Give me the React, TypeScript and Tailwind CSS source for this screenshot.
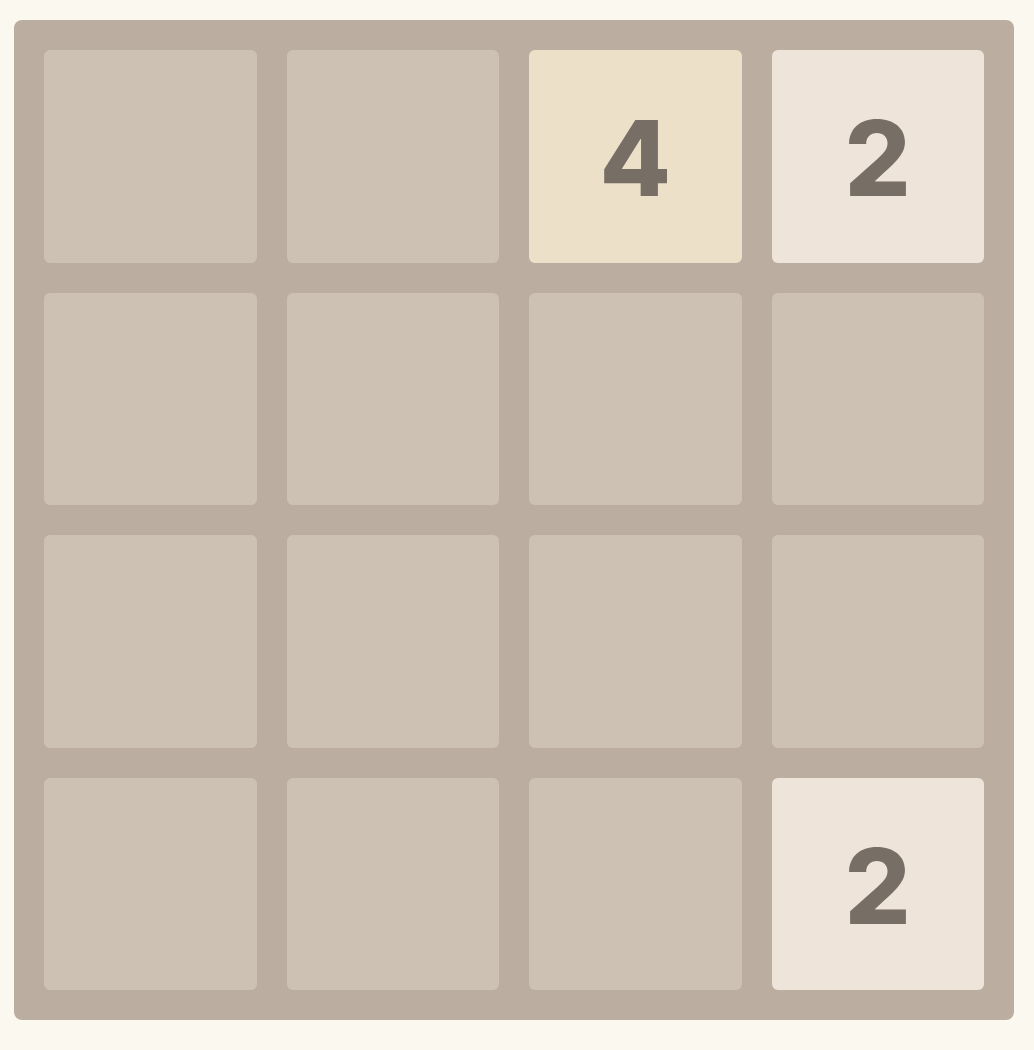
import React from 'react';

// 0 means an empty cell
const board: number[][] = [
    [0, 0, 4, 2],
    [0, 0, 0, 0],
    [0, 0, 0, 0],
    [0, 0, 0, 2],
];

const tileClass = (value: number) => {
    switch (value) {
        case 2:
            return 'bg-[#eee4da] text-[#776e65]';
        case 4:
            return 'bg-[#ede0c8] text-[#776e65]';
        default:
            return 'bg-[#cdc1b4]';
    }
};

const Tile: React.FC<{ value: number }> = ({ value }) => (
    <div
        className={`flex items-center justify-center rounded-md font-extrabold text-[104px] leading-none pt-[4px] ${tileClass(value)}`}
        style={{ fontFamily: 'Inter, "Noto Sans", sans-serif' }}
    >
        {value > 0 ? value : null}
    </div>
);

const App: React.FC = () => {
    return (
        <div className="min-h-screen bg-[#fbf8ef] pl-[14px] pt-[20px] pb-[30px]">
            <div className="grid h-[1000px] w-[1000px] grid-cols-4 grid-rows-4 gap-[30px] rounded-lg bg-[#bbada0] p-[30px]">
                {board.flatMap((row, r) =>
                    row.map((value, c) => <Tile key={`${r}-${c}`} value={value} />)
                )}
            </div>
        </div>
    );
};

export default App;
